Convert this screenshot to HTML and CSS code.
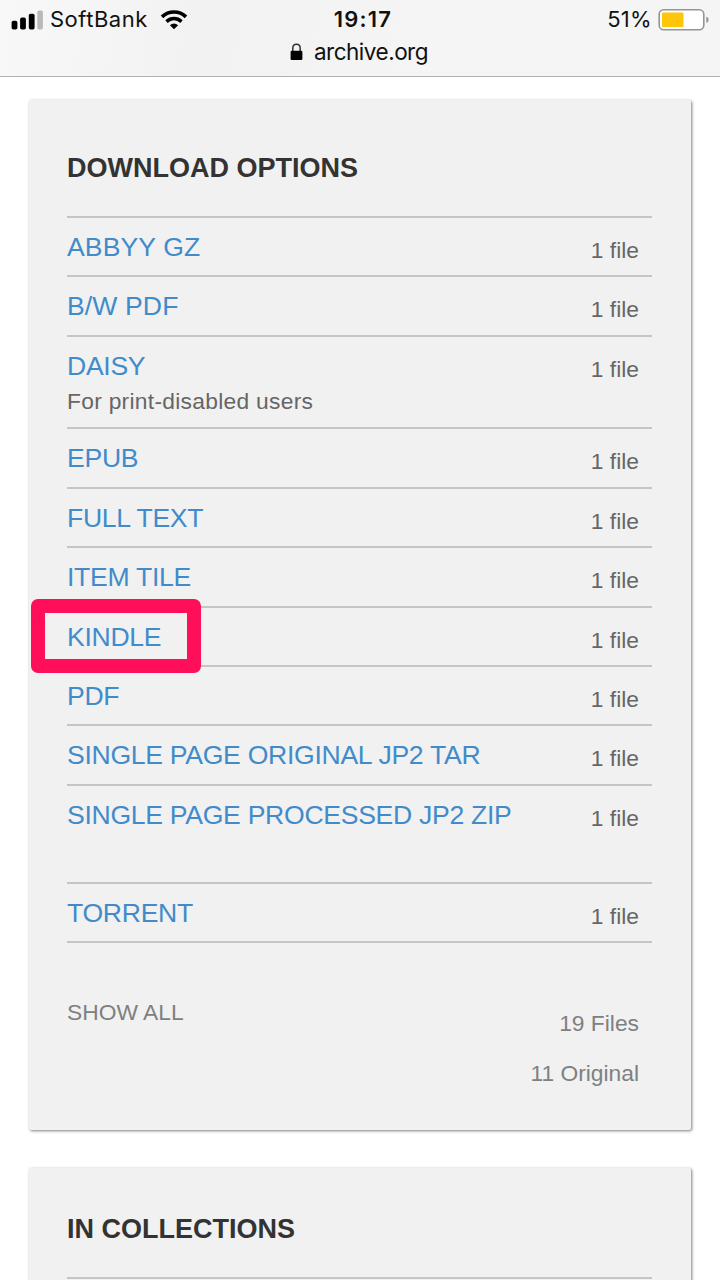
FILE: index.html
```html
<!DOCTYPE html>
<html lang="en">
<head>
    <meta charset="UTF-8">
    <meta name="viewport" content="width=device-width, initial-scale=1.0">
    <title>archive.org</title>
    <link rel="stylesheet" href="styles.css">
</head>
<body>
    <header>
        <div class="status">
            <div class="left">
                <svg class="signal" width="32" height="20" viewBox="0 0 32 20">
                    <rect x="0.6" y="10.7" width="5.8" height="8.8" rx="1.8"/>
                    <rect x="9.1" y="7.6" width="5.8" height="11.9" rx="1.8"/>
                    <rect x="17.8" y="3.8" width="5.8" height="15.7" rx="1.8"/>
                    <rect x="26.3" y="0.5" width="5.6" height="19" rx="1.8" fill="#b9b9b9"/>
                </svg>
                <span class="carrier">SoftBank</span>
                <svg class="wifi" width="28" height="20" viewBox="0 0 28 20">
                    <path d="M2 6.8 C8.8 0.4 19.2 0.4 26 6.8" fill="none" stroke="#000" stroke-width="3.7"/>
                    <path d="M6.5 11.6 C10.8 7.6 17.2 7.6 21.5 11.6" fill="none" stroke="#000" stroke-width="3.5"/>
                    <path d="M9.9 15.2 Q14 11.8 18.1 15.2 L14 19.3 Z"/>
                </svg>
            </div>
            <div class="time">19:17</div>
            <div class="right">
                <span class="percent">51%</span>
                <svg class="battery" width="52" height="24" viewBox="0 0 52 24">
                    <rect x="1.2" y="1.7" width="44.6" height="20" rx="4.5" fill="#fff" stroke="#949494" stroke-width="1.6"/>
                    <rect x="4" y="4.4" width="21.5" height="14.6" rx="1" fill="#ffc50a"/>
                    <path d="M48.3 8.5 Q50.7 9.5 50.7 11.7 Q50.7 14 48.3 15 Z" fill="#949494"/>
                </svg>
            </div>
        </div>
        <div class="address">
            <svg class="lock" width="13" height="18" viewBox="0 0 13 18">
                <path d="M2.8 9 V5.2 C2.8 0 10.2 0 10.2 5.2 V9" fill="none" stroke="#333" stroke-width="1.5"/>
                <rect x="0.6" y="7.8" width="11.8" height="9.2" rx="1.2"/>
            </svg>
            <span class="domain">archive.org</span>
        </div>
    </header>

    <main>
        <section class="card downloads">
            <h2>DOWNLOAD OPTIONS</h2>
            <ul>
                <li class="wide"><a href="#">ABBYY GZ</a><span class="count">1 file</span></li>
                <li class="wide"><a href="#">B/W PDF</a><span class="count">1 file</span></li>
                <li class="daisy">
                    <div><a href="#">DAISY</a><p>For print-disabled users</p></div>
                    <span class="count">1 file</span>
                </li>
                <li><a href="#">EPUB</a><span class="count">1 file</span></li>
                <li><a href="#">FULL TEXT</a><span class="count">1 file</span></li>
                <li><a href="#">ITEM TILE</a><span class="count">1 file</span></li>
                <li class="kindle"><a href="#">KINDLE</a><span class="count">1 file</span></li>
                <li><a href="#">PDF</a><span class="count">1 file</span></li>
                <li><a href="#">SINGLE PAGE ORIGINAL JP2 TAR</a><span class="count">1 file</span></li>
                <li class="zip"><a href="#">SINGLE PAGE PROCESSED JP2 ZIP</a><span class="count">1 file</span></li>
                <li class="torrent"><a href="#">TORRENT</a><span class="count">1 file</span></li>
            </ul>
            <div class="summary">
                <a href="#" class="show-all">SHOW ALL</a>
                <div class="totals">
                    <div>19 Files</div>
                    <div>11 Original</div>
                </div>
            </div>
        </section>

        <section class="card collections">
            <h2>IN COLLECTIONS</h2>
            <ul>
                <li></li>
            </ul>
        </section>
    </main>
</body>
</html>
```

FILE: styles.css
```css
*,
*::before {
    margin: 0;
    padding: 0;
    box-sizing: border-box;
}

body {
    font-family: "Liberation Sans", Arial, sans-serif;
    background-color: #fff;
    width: 720px;
    height: 1280px;
    overflow: hidden;
}

/* phone status bar and address */
header {
    height: 77px;
    background: linear-gradient(100deg, #f8f8f8, #f2f2f2 28%, #f5f5f5 60%);
    border-bottom: 1px solid #b2b2b2;
    font-family: Inter, sans-serif;
    color: #111;
}

.status {
    display: grid;
    grid-template-columns: 1fr auto 1fr;
    align-items: center;
    height: 39px;
    padding: 0 10px 0 11px;
    font-size: 22px;
    line-height: 39px;
}

.left,
.right {
    display: flex;
    align-items: center;
}

.right {
    justify-content: flex-end;
}

.carrier {
    margin: 0 12px 0 7px;
    letter-spacing: 0.5px;
}

.time {
    padding-left: 5px;
    font-weight: 600;
    letter-spacing: 1.2px;
}

.percent {
    margin-right: 6px;
    letter-spacing: 0.3px;
}

.address {
    display: flex;
    justify-content: center;
    align-items: center;
    height: 26px;
    padding-right: 2px;
    font-size: 22.5px;
    line-height: 26px;
}

.lock {
    margin-right: 11px;
}

.domain {
    letter-spacing: -0.5px;
}

main {
    padding: 23px 29px 0 29px;
}

.card {
    background-color: #f1f1f1;
    border-radius: 2px;
    box-shadow: 1px 1px 3px rgba(0, 0, 0, 0.5);
    padding: 0 39px 0 38px;
}

.downloads {
    height: 1030px;
    margin-bottom: 38px;
}

.collections {
    height: 140px;
}

h2 {
    height: 116px;
    padding-top: 52px;
    font-size: 27px;
    line-height: 32px;
    color: #333;
    white-space: nowrap;
}

.collections h2 {
    height: 109px;
    padding-top: 45px;
}

ul {
    list-style: none;
}

li {
    display: flex;
    justify-content: space-between;
    position: relative;
    height: 59.43px;
    border-top: 2px solid #c5c5c5;
    padding: 14px 13px 0 0;
}

li a {
    font-size: 26.6px;
    line-height: 30px;
    letter-spacing: -0.3px;
    color: #428bca;
    text-decoration: none;
    white-space: nowrap;
}

.wide a {
    letter-spacing: 0.1px;
}

li p {
    margin-top: 6px;
    font-size: 22.8px;
    line-height: 28px;
    letter-spacing: 0.28px;
    color: #666;
}

.count {
    padding-top: 4px;
    font-size: 22.8px;
    line-height: 28px;
    color: #666;
}

.daisy {
    height: 92.4px;
}

.zip {
    height: 98px;
}

.torrent {
    height: 61px;
    border-bottom: 2px solid #c5c5c5;
}

/* marker around the Kindle link */
.kindle::before {
    content: "";
    position: absolute;
    left: -36px;
    top: -9px;
    width: 170px;
    height: 74px;
    border: 14px solid #ff0f59;
    border-radius: 7px;
    z-index: 1;
}

.summary {
    display: flex;
    justify-content: space-between;
    padding: 54px 13px 0 0;
    font-size: 22.8px;
    line-height: 30px;
    color: #808080;
}

.show-all {
    color: #808080;
    text-decoration: none;
}

.totals {
    padding-top: 11px;
    text-align: right;
}

.totals div {
    margin-bottom: 20px;
}
```
